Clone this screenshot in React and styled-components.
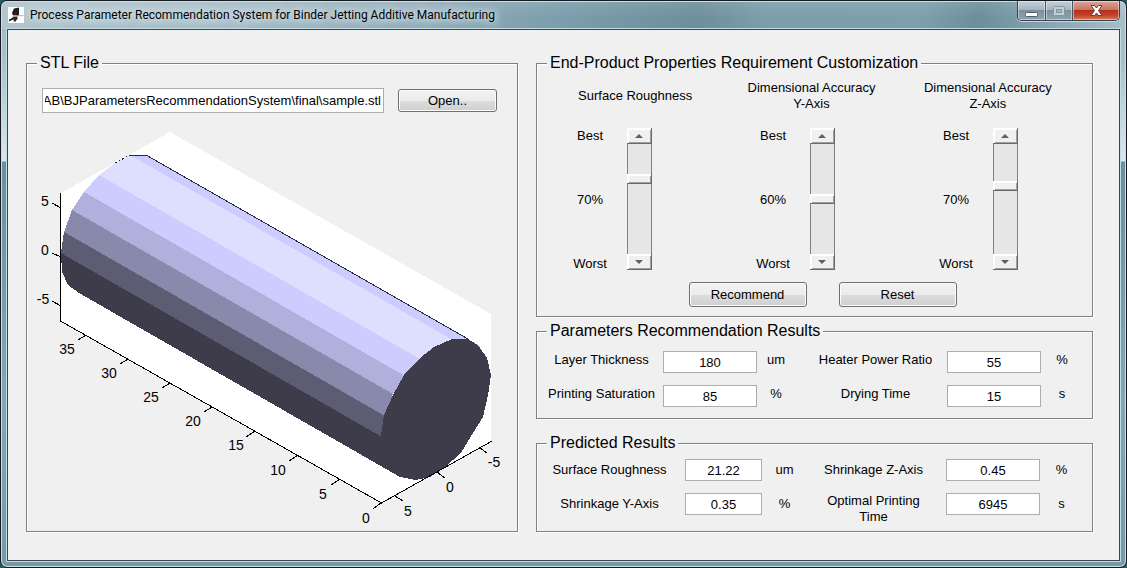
import React, { useState } from "react";
import styled, { createGlobalStyle } from "styled-components";

const Global = createGlobalStyle`
  *, *::before, *::after { box-sizing: border-box; }
  body {
    margin: 0;
    background: #2b5a5c;
    color: #000;
    font: 13px/16px "Liberation Sans", Arial, sans-serif;
  }
  button, input { font: inherit; color: inherit; margin: 0; }
`;

const Frame = styled.div`
  min-height: 100vh;
  display: flex;
  flex-direction: column;
  padding: 0 6px 6px;
  border: 1px solid #141b20;
  border-radius: 7px;
  background: linear-gradient(180deg, #a3bac5 0, #a9c0ca 60px, #dde7ec 160px, #6b8f9e 161px, #86a6b3 400px, #7799a7 100%);
  box-shadow: inset 0 0 0 1px #c3e2ea;
`;

const TitleBar = styled.header`
  height: 28px;
  margin: 0 -5px;
  padding-left: 6px;
  display: flex;
  align-items: flex-start;
  border-top: 1px solid #c3e2ea;
  border-radius: 6px 6px 0 0;
  background:
    linear-gradient(180deg, rgba(255, 255, 255, 0.1), rgba(255, 255, 255, 0) 60%),
    linear-gradient(90deg, #b0c5ce 0, #a5bcc6 20%, #8fabb8 38%, #7b9dac 50%, #6d8e9b 62%, #7c9dab 68%, #7d9eac 82%, #6b8e9b 87%, #86a4b0 93%, #a8bfca 100%);
`;

const AppIcon = styled.svg`
  width: 16px;
  height: 16px;
  margin-top: 5px;
`;

const Title = styled.h1`
  flex: 1;
  margin: 5px 0 0 6px;
  font: 12px/16px Roboto, "Segoe UI", sans-serif;
  white-space: nowrap;
  text-shadow: 0 0 6px #dfe9ee, 0 0 10px #dfe9ee, 0 0 14px #dfe9ee;
`;

const WindowButtons = styled.div`
  display: flex;
  height: 20px;
  margin: -1px 5px 0 0;
  border: 1px solid #35424a;
  border-top: 0;
  border-radius: 0 0 5px 5px;
  overflow: hidden;
  box-shadow: 0 1px 0 #c3dbe4;
`;

const WindowButton = styled.button`
  width: ${(p) => (p.$close ? 47 : 27)}px;
  padding: 0;
  display: flex;
  align-items: center;
  justify-content: center;
  border: 0;
  border-left: ${(p) => (p.$first ? "0" : "1px solid #46545c")};
  box-shadow: inset 0 0 0 1px rgba(255, 255, 255, 0.45);
  background: ${(p) =>
    p.$close
      ? "linear-gradient(180deg, #dba69b 0, #cb7362 47%, #b5301a 50%, #c2442b 75%, #db7c55 100%)"
      : "linear-gradient(180deg, #c3d0d7 0, #a5b5be 47%, #7b909b 50%, #8fa5b0 100%)"};
`;

const Client = styled.main`
  flex: 1;
  display: grid;
  grid-template-columns: 492fr 557fr;
  align-items: start;
  gap: 18px;
  padding: 24px 26px 28px 18px;
  border: 1px solid #3b474d;
  box-shadow: 0 0 0 1px #c3dbe4;
  background: #f0f0f0;
`;

const ResultColumn = styled.div`
  display: grid;
  min-width: 0;
`;

const Panel = styled.fieldset`
  min-width: 0;
  margin: ${(p) => p.$gap || 0}px 0 0;
  padding: 0;
  border: 1px solid #808080;
  box-shadow: 1px 1px 0 #fff, inset 1px 1px 0 #fff;
`;

const Legend = styled.legend`
  margin-left: 10px;
  padding: 0 3px;
  font-size: 16px;
  line-height: 18px;
  background: #f0f0f0;
`;

const FileRow = styled.div`
  display: flex;
  align-items: center;
  gap: 14px;
  padding: 16px 20px 0 15px;
`;

const TextBox = styled.input`
  width: 100%;
  min-width: 0;
  height: 22px;
  padding: 0 2px;
  border: 1px solid #abadb3;
  border-radius: 0;
  background: #fff;
  text-align: center;
`;

const PathBox = styled(TextBox)`
  flex: 1;
  height: 25px;
  direction: rtl;
  text-align: right;
`;

const PushButton = styled.button`
  width: ${(p) => p.$width}px;
  height: ${(p) => p.$height}px;
  padding: 0;
  border: 1px solid #707070;
  border-radius: 3px;
  box-shadow: inset 0 0 0 1px #fcfcfc;
  background: linear-gradient(180deg, #f2f2f2 0, #ebebeb 50%, #dddddd 51%, #cfcfcf 100%);
`;

const Plot = styled.svg`
  display: block;
  width: 100%;
  font-size: 14px;
`;

const Headings = styled.div`
  display: grid;
  grid-template-columns: repeat(3, 1fr);
  align-items: center;
  padding: 8px 16px 0 10px;
  text-align: center;
`;

const Heading = styled.label`
  white-space: pre-line;
`;

const Levels = styled.div`
  display: flex;
  justify-content: space-between;
  padding: 16px 74px 0 27px;
`;

const Level = styled.div`
  display: flex;
  gap: 11px;
`;

const LevelLabels = styled.div`
  width: 52px;
  height: 144px;
  display: flex;
  flex-direction: column;
  justify-content: space-between;
  text-align: center;
`;

const ScrollBar = styled.div`
  width: 25px;
  height: 142px;
  display: flex;
  flex-direction: column;
`;

const raised = `
  border: 1px solid #696969;
  border-width: 0 1px 1px 0;
  background: #f0f0f0;
  box-shadow: inset 2px 2px 0 #fff, inset -1px -1px 0 #a0a0a0;
`;

const ArrowButton = styled.button`
  height: 16px;
  padding: 0;
  display: flex;
  align-items: center;
  justify-content: center;
  ${raised}
`;

const Slider = styled.input`
  flex: 1;
  min-height: 0;
  width: 25px;
  writing-mode: vertical-lr;
  direction: rtl;
  appearance: none;
  border: 1px solid #808080;
  border-width: 0 1px;
  background: #e6e6e6;

  &::-webkit-slider-runnable-track {
    width: 25px;
    height: 100%;
    margin: 0 -1px;
  }
  &::-webkit-slider-thumb {
    appearance: none;
    width: 25px;
    height: 10px;
    ${raised}
  }
`;

const Actions = styled.div`
  display: flex;
  justify-content: center;
  gap: 32px;
  padding: 10px 0 9px 16px;
`;

const FieldGrid = styled.div`
  display: grid;
  grid-template-columns: ${(p) => p.$columns};
  align-items: start;
  row-gap: 12px;
  padding: ${(p) => p.$pad};
  text-align: center;
`;

const FieldText = styled.span`
  display: flex;
  align-items: center;
  justify-content: center;
  min-height: ${(p) => p.$line}px;
  padding: ${(p) => p.$pad || "0"};
  white-space: pre-line;
`;

const strips = [
  ["147,155 130,155 451,339 468,339", "#ccccff"],
  ["130,155 115,163 99,175 420,359 436,347 451,339", "#dedeff"],
  ["99,175 84,192 405,376 420,359", "#ccccff"],
  ["84,192 72,210 393,394 405,376", "#b0b0dd"],
  ["72,210 64,232 385,416 393,394", "#8989ab"],
  ["64,232 61,253 382,437 385,416", "#5c5c72"],
  ["61,253 62,272 68,285 79,293 400,477 440,450 382,437", "#3e3c4a"],
];

const ticks = [
  [61, 208, 52, 203, "5", 45, 201],
  [61, 257, 52, 253, "0", 45, 250],
  [61, 306, 52, 301, "-5", 43, 299],
  [86, 335, 78, 340, "35", 67, 349],
  [128, 359, 120, 364, "30", 109, 373],
  [170, 383, 162, 388, "25", 151, 397],
  [212, 407, 204, 412, "20", 193, 421],
  [255, 431, 246, 437, "15", 236, 445],
  [298, 455, 289, 461, "10", 278, 470],
  [340, 479, 331, 485, "5", 323, 494],
  [381, 503, 373, 509, "0", 366, 518],
  [395, 496, 403, 501, "5", 408, 511],
  [437, 472, 445, 478, "0", 450, 487],
  [480, 448, 487, 453, "-5", 494, 462],
];

function CylinderPlot() {
  return (
    <Plot viewBox="27 113 490 418" role="img" aria-label="3D view of the part">
      <g shapeRendering="crispEdges">
        <polygon points="61,193 170,132 491,314 491,442 382,503 61,321" fill="#fff" />
        {strips.map(([points, fill]) => (
          <polygon key={points} points={points} fill={fill} />
        ))}
        <polygon
          fill="#3e3c4a"
          points="452,339 468,339 478,345 487,358 491,375 488,395 483,417 473,433 461,453 445,467 430,477 415,480 400,477 388,466 381,436 384,415 393,395 404,375 420,358 434,347"
        />
        <g fill="none" stroke="#2b2a3a">
          <path d="M130 155.500H147L468 339" />
          <path d="M115 163L130 155" strokeDasharray="2 2" />
        </g>
        <g fill="none" stroke="#000">
          <path d="M60.500 193V321L381.500 503L492 441" />
          {ticks.map(([x1, y1, x2, y2]) => (
            <path key={x1 + "-" + y1} d={`M${x1} ${y1}L${x2} ${y2}`} />
          ))}
        </g>
      </g>
      {ticks.map(([x1, y1, , , label, x, y]) => (
        <text key={x1 + "-" + y1} x={x} y={y + 5} textAnchor="middle">
          {label}
        </text>
      ))}
    </Plot>
  );
}

const properties = [
  { id: "roughness", heading: "Surface Roughness", level: "70%", position: 70 },
  { id: "accuracy-y", heading: "Dimensional Accuracy\nY-Axis", level: "60%", position: 50 },
  { id: "accuracy-z", heading: "Dimensional Accuracy\nZ-Axis", level: "70%", position: 63 },
];

function PropertyLevel({ id, level, position }) {
  const [value, setValue] = useState(position);
  const step = (by) => setValue((v) => Math.max(0, Math.min(100, v + by)));
  return (
    <Level>
      <LevelLabels>
        <span>Best</span>
        <span>{level}</span>
        <span>Worst</span>
      </LevelLabels>
      <ScrollBar>
        <ArrowButton type="button" aria-label="Increase" onClick={() => step(10)}>
          <svg width="8" height="4">
            <path d="M0 4L4 0L8 4Z" fill="#606060" />
          </svg>
        </ArrowButton>
        <Slider id={id} type="range" min="0" max="100" value={value} onChange={(e) => setValue(+e.target.value)} />
        <ArrowButton type="button" aria-label="Decrease" onClick={() => step(-10)}>
          <svg width="8" height="4">
            <path d="M0 0L4 4L8 0Z" fill="#606060" />
          </svg>
        </ArrowButton>
      </ScrollBar>
    </Level>
  );
}

function Fields({ columns, pad, line, labelPads, fields }) {
  return (
    <FieldGrid $columns={columns} $pad={pad}>
      {fields.map(([id, label, value, unit], i) => (
        <React.Fragment key={id}>
          <FieldText as="label" htmlFor={id} $line={line} $pad={labelPads[i % 2]}>
            {label}
          </FieldText>
          <TextBox id={id} type="text" defaultValue={value} />
          <FieldText $line={line}>{unit}</FieldText>
        </React.Fragment>
      ))}
    </FieldGrid>
  );
}

const recommended = [
  ["layer", "Layer Thickness", "180", "um"],
  ["heater", "Heater Power Ratio", "55", "%"],
  ["saturation", "Printing Saturation", "85", "%"],
  ["drying", "Drying Time", "15", "s"],
];

const predicted = [
  ["pred-roughness", "Surface Roughness", "21.22", "um"],
  ["pred-z", "Shrinkage Z-Axis", "0.45", "%"],
  ["pred-y", "Shrinkage Y-Axis", "0.35", "%"],
  ["pred-time", "Optimal Printing\nTime", "6945", "s"],
];

export default function App() {
  return (
    <Frame>
      <Global />
      <TitleBar>
        <AppIcon viewBox="0 0 16 16" aria-hidden="true">
          <rect width="16" height="16" fill="#fff" />
          <path d="M6 1.500L11 0.500V8L9 9.500L5 8.500L4 6Z" fill="#211d22" />
          <path d="M1 14.500V12.500L4 11L6 9.500L9.500 10V12L8 13.500V14.500H5.500L6 12.500L3 13.500Z" fill="#2b2528" />
          <path d="M5 8.700H15.500" stroke="#e59a7c" />
          <path d="M4.500 10L8 8" stroke="#b5a8a5" />
        </AppIcon>
        <Title>Process Parameter Recommendation System for Binder Jetting Additive Manufacturing</Title>
        <WindowButtons>
          <WindowButton type="button" aria-label="Minimize" $first>
            <svg width="13" height="16">
              <rect x="0.500" y="9.500" width="12" height="4" rx="1" fill="#fff" stroke="#50606c" />
            </svg>
          </WindowButton>
          <WindowButton type="button" aria-label="Maximize" disabled>
            <svg width="12" height="10">
              <rect x="0.500" y="0.500" width="11" height="9" rx="1" fill="#c3ced4" stroke="#8296a0" />
              <rect x="3.500" y="3.500" width="5" height="3" fill="#a3b4bd" stroke="#8296a0" />
            </svg>
          </WindowButton>
          <WindowButton type="button" aria-label="Close" $close>
            <svg width="13" height="11">
              <path d="M1 0.500H4.500L6.500 3L8.500 0.500H12L8.500 5.500L12 10.500H8.500L6.500 8L4.500 10.500H1L4.500 5.500Z" fill="#fff" stroke="#53434f" />
            </svg>
          </WindowButton>
        </WindowButtons>
      </TitleBar>
      <Client>
        <Panel>
          <Legend>STL File</Legend>
          <FileRow>
            <PathBox type="text" aria-label="STL file path" defaultValue={"AB\\BJParametersRecommendationSystem\\final\\sample.stl"} />
            <PushButton type="button" $width={99} $height={23}>
              Open..
            </PushButton>
          </FileRow>
          <CylinderPlot />
        </Panel>
        <ResultColumn>
          <Panel>
            <Legend>End-Product Properties Requirement Customization</Legend>
            <Headings>
              {properties.map((p) => (
                <Heading key={p.id} htmlFor={p.id}>
                  {p.heading}
                </Heading>
              ))}
            </Headings>
            <Levels>
              {properties.map((p) => (
                <PropertyLevel key={p.id} {...p} />
              ))}
            </Levels>
            <Actions>
              <PushButton type="button" $width={118} $height={25}>
                Recommend
              </PushButton>
              <PushButton type="button" $width={118} $height={25}>
                Reset
              </PushButton>
            </Actions>
          </Panel>
          <Panel $gap={5}>
            <Legend>Parameters Recommendation Results</Legend>
            <Fields
              columns="121fr 94fr 38fr 152fr 94fr 42fr"
              pad="11px 9px 11px 5px"
              line={17}
              labelPads={["0 2px 0 0", "0 0 0 9px"]}
              fields={recommended}
            />
          </Panel>
          <Panel $gap={15}>
            <Legend>Predicted Results</Legend>
            <Fields
              columns="143fr 77fr 45fr 139fr 94fr 43fr"
              pad="7px 9px 6px 5px"
              line={22}
              labelPads={["0 8px 0 0", "0 6px 0 0"]}
              fields={predicted}
            />
          </Panel>
        </ResultColumn>
      </Client>
    </Frame>
  );
}
